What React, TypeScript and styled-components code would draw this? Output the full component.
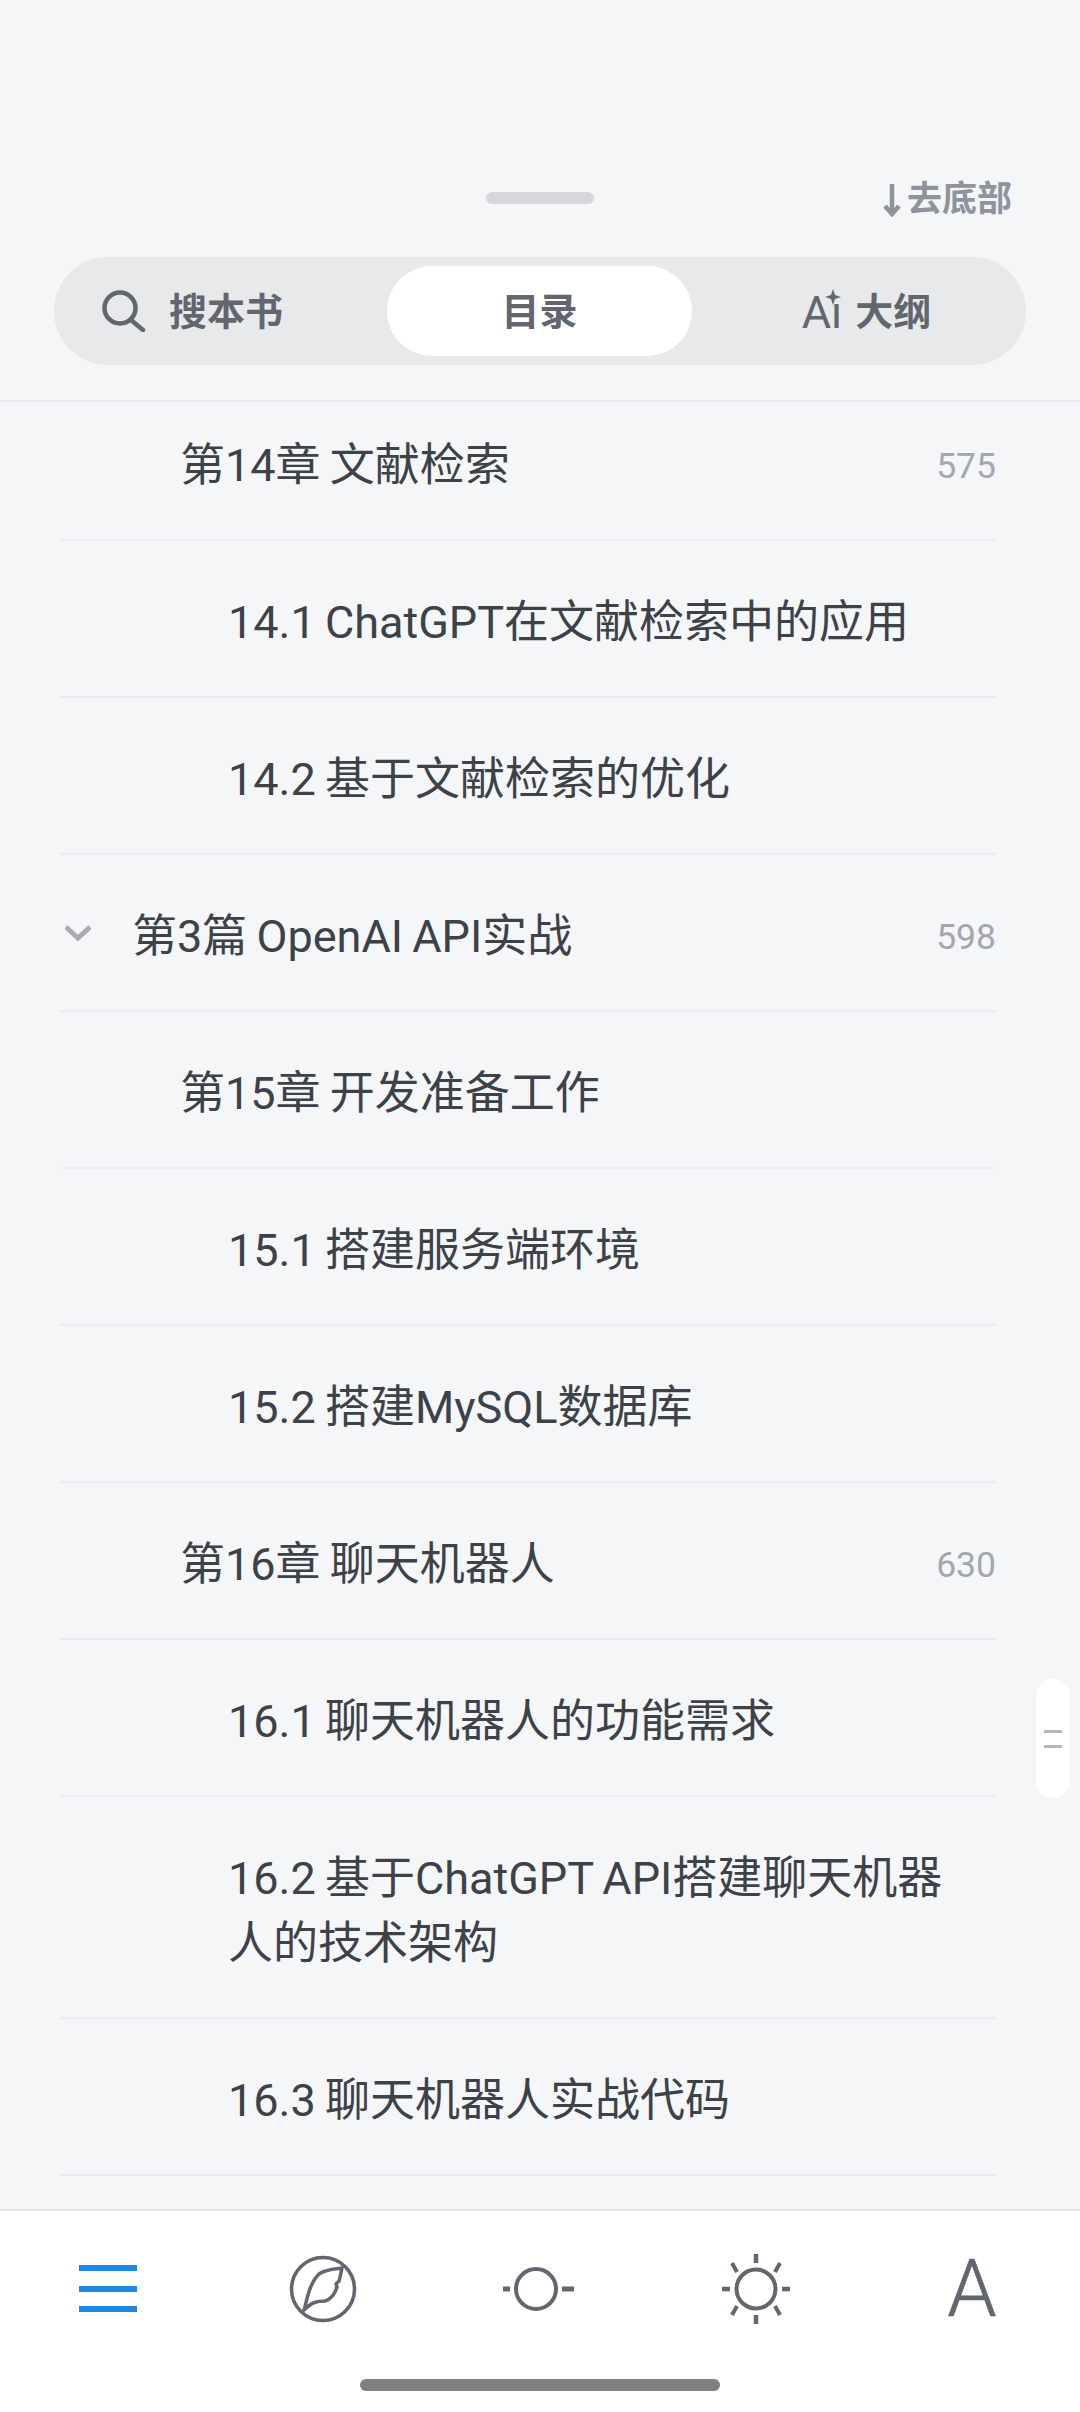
import * as React from "react";
import styled, { createGlobalStyle } from "styled-components";

const GlobalStyle = createGlobalStyle`
  html, body {
    margin: 0;
    padding: 0;
    background: #f4f6f8;
  }
  * {
    box-sizing: border-box;
  }
`;

const FONT = `Roboto, "Noto Sans CJK SC", sans-serif`;

const Page = styled.div`
  position: relative;
  width: 1080px;
  height: 2412px;
  display: flex;
  flex-direction: column;
  overflow: hidden;
  background: #f4f6f8;
  font-family: ${FONT};
`;

const Header = styled.header`
  flex: 0 0 auto;
  height: 400px;
  padding: 180px 54px 0;
  display: flex;
  flex-direction: column;
`;

const TopRow = styled.div`
  height: 38px;
  margin-bottom: 39px;
  display: grid;
  grid-template-columns: 1fr 108px 1fr;
  align-items: center;
`;

const Handle = styled.div`
  grid-column: 2;
  height: 12px;
  margin-top: -4px;
  border-radius: 6px;
  background: #d5d7da;
`;

const ToBottom = styled.div`
  justify-self: end;
  margin-right: 14px;
  margin-top: 1px;
  display: flex;
  align-items: center;
  gap: 5px;
  font-size: 35px;
  line-height: 38px;
  font-weight: 700;
  color: #8f939b;
`;

const Segments = styled.div`
  height: 108px;
  padding: 9px;
  display: grid;
  grid-template-columns: 324px 305px 1fr;
  border-radius: 54px;
  background: #e7e9eb;
`;

const Segment = styled.div<{ $active?: boolean; $inset?: number; $start?: boolean }>`
  display: flex;
  align-items: center;
  justify-content: ${(p) => (p.$start ? "flex-start" : "center")};
  padding-left: ${(p) => p.$inset ?? 0}px;
  gap: 13px;
  border-radius: 45px;
  font-size: 38px;
  font-weight: 700;
  color: #62666e;
  background: ${(p) => (p.$active ? "#ffffff" : "transparent")};
`;

const Label = styled.span<{ $indent?: number }>`
  margin-bottom: 6px;
  margin-left: ${(p) => p.$indent ?? 0}px;
`;

const AiMark = styled.span`
  position: relative;
  font-size: 45px;
  font-weight: 400;
  line-height: 45px;
  margin-top: 2px;
`;

const Sparkle = styled.svg`
  position: absolute;
  right: 1px;
  top: -1px;
`;

const ListArea = styled.main`
  flex: 1;
  min-height: 0;
  overflow: hidden;
  border-top: 2px solid #ecedf0;
`;

const List = styled.ul`
  list-style: none;
  margin: -18px 84px 0 60px;
  padding: 0;
`;

const Row = styled.li<{ $level: number }>`
  display: flex;
  align-items: center;
  min-height: 157px;
  padding: 49px 0 41px ${(p) => [72, 120, 168][p.$level]}px;
  position: relative;
  border-bottom: 2px solid #ecedf0;
`;

const Chevron = styled.svg`
  position: absolute;
  left: 5px;
  top: 70px;
`;

const Title = styled.span`
  flex: 1;
  padding-right: 30px;
  font-size: 45px;
  line-height: 65px;
  color: #3d4148;
  word-spacing: -2px;
`;

const PageNo = styled.span`
  font-size: 35.5px;
  color: #a3a7ae;
`;

const ScrollGrip = styled.div`
  position: absolute;
  left: 1036px;
  top: 1679px;
  width: 34px;
  height: 119px;
  display: flex;
  flex-direction: column;
  align-items: center;
  justify-content: center;
  gap: 12px;
  border-radius: 17px;
  background: #ffffff;
`;

const GripLine = styled.span`
  width: 18px;
  height: 3px;
  background: #b7b7b7;
`;

const Toolbar = styled.footer`
  position: relative;
  flex: 0 0 203px;
  padding-top: 38px;
  display: grid;
  grid-template-columns: 215px 216px 216px 217px 216px;
  align-items: start;
  justify-items: center;
  background: #ffffff;
  border-top: 2px solid #e3e4e6;
`;

const ToolCell = styled.div`
  height: 80px;
  display: flex;
  align-items: center;
  justify-content: center;
`;

const FontGlyph = styled.span`
  font-size: 79px;
  line-height: 80px;
  font-weight: 300;
  color: #62666e;
  -webkit-text-stroke: 0.6px #62666e;
`;

const HomeBar = styled.div`
  position: absolute;
  left: 360px;
  bottom: 21px;
  width: 360px;
  height: 12px;
  border-radius: 6px;
  background: #808080;
`;

type Entry = { title: string; level: number; page?: number; open?: boolean };

const entries: Entry[] = [
  { title: "第14章 文献检索", level: 1, page: 575 },
  { title: "14.1 ChatGPT在文献检索中的应用", level: 2 },
  { title: "14.2 基于文献检索的优化", level: 2 },
  { title: "第3篇 OpenAI API实战", level: 0, page: 598, open: true },
  { title: "第15章 开发准备工作", level: 1 },
  { title: "15.1 搭建服务端环境", level: 2 },
  { title: "15.2 搭建MySQL数据库", level: 2 },
  { title: "第16章 聊天机器人", level: 1, page: 630 },
  { title: "16.1 聊天机器人的功能需求", level: 2 },
  { title: "16.2 基于ChatGPT API搭建聊天机器人的技术架构", level: 2 },
  { title: "16.3 聊天机器人实战代码", level: 2 },
];

const GREY = "#62666e";

const ArrowDown = () => (
  <svg width="20" height="34" viewBox="0 0 20 34" fill="none" stroke="#8f939b" strokeWidth="4.5">
    <path d="M10 1v30" />
    <path d="M3 23l7 8 7-8" />
  </svg>
);

const SearchIcon = () => (
  <svg width="44" height="42" viewBox="0 0 44 42" fill="none" stroke={GREY} strokeWidth="4.5" strokeLinecap="round">
    <circle cx="18" cy="18" r="15.5" />
    <path d="M29 30l12 10" />
  </svg>
);

const MenuIcon = () => (
  <svg width="58" height="52" viewBox="0 0 58 52" fill="#1e88e5">
    <rect x="0" y="2" width="58" height="6" />
    <rect x="0" y="23" width="58" height="6" />
    <rect x="0" y="43" width="58" height="6" />
  </svg>
);

const CompassIcon = () => (
  <svg width="68" height="68" viewBox="0 0 68 68" fill="none" stroke={GREY} strokeWidth="3.5" strokeLinejoin="round">
    <circle cx="34" cy="34" r="31.5" />
    <path d="M15 55C18 45 20 29 30 19C37 14 45 14 53 13C52 18 51 23 50 26L47 29L48 32C46 39 42 44 36 46C28 46 23 47 15 55Z" />
  </svg>
);

const DimSunIcon = () => (
  <svg width="74" height="48" viewBox="0 0 74 48" fill="none" stroke={GREY}>
    <circle cx="34" cy="24" r="20" strokeWidth="4" />
    <path d="M1 24h7" strokeWidth="5" />
    <path d="M60 24h12" strokeWidth="5" />
  </svg>
);

const BrightSunIcon = () => (
  <svg width="70" height="72" viewBox="0 0 70 72" fill="none" stroke={GREY}>
    <circle cx="35" cy="36" r="19.5" strokeWidth="4" />
    <path d="M35 1v9M35 62v9M1 36h8M61 36h8" strokeWidth="4.5" />
    <path d="M11 10l5 9M59 10l-5 9M11 62l5-9M59 62l-5-9" strokeWidth="4" />
  </svg>
);

export default function App() {
  return (
    <Page>
      <GlobalStyle />
      <Header>
        <TopRow>
          <Handle />
          <ToBottom>
            <ArrowDown />
            去底部
          </ToBottom>
        </TopRow>
        <Segments>
          <Segment $start $inset={39}>
            <SearchIcon />
            <Label $indent={10}>搜本书</Label>
          </Segment>
          <Segment $active>
            <Label>目录</Label>
          </Segment>
          <Segment $inset={24}>
            <AiMark>
              Aı
              <Sparkle width="16" height="16" viewBox="0 0 14 14" fill={GREY}>
                <path d="M7 0l1.8 5.2L14 7l-5.2 1.8L7 14 5.2 8.8 0 7l5.2-1.8z" />
              </Sparkle>
            </AiMark>
            <Label>大纲</Label>
          </Segment>
        </Segments>
      </Header>
      <ListArea>
        <List>
          {entries.map((entry) => (
            <Row key={entry.title} $level={entry.level}>
              {entry.open && (
                <Chevron width="26" height="16" viewBox="0 0 26 16" fill="none" stroke="#a8abb2" strokeWidth="5">
                  <path d="M1 2l12 11L25 2" />
                </Chevron>
              )}
              <Title>{entry.title}</Title>
              {entry.page && <PageNo>{entry.page}</PageNo>}
            </Row>
          ))}
        </List>
      </ListArea>
      <ScrollGrip>
        <GripLine />
        <GripLine />
      </ScrollGrip>
      <Toolbar>
        <ToolCell><MenuIcon /></ToolCell>
        <ToolCell><CompassIcon /></ToolCell>
        <ToolCell><DimSunIcon /></ToolCell>
        <ToolCell><BrightSunIcon /></ToolCell>
        <ToolCell><FontGlyph>A</FontGlyph></ToolCell>
        <HomeBar />
      </Toolbar>
    </Page>
  );
}
